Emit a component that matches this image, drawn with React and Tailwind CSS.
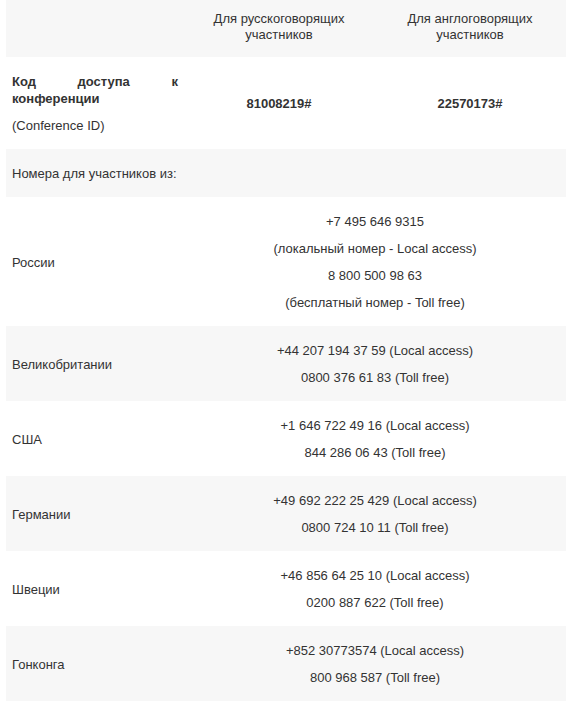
import React from 'react'

const rows = [
	{ country: 'России', lines: ['+7 495 646 9315', '(локальный номер - Local access)', '8 800 500 98 63', '(бесплатный номер - Toll free)'] },
	{ country: 'Великобритании', lines: ['+44 207 194 37 59 (Local access)', '0800 376 61 83 (Toll free)'] },
	{ country: 'США', lines: ['+1 646 722 49 16 (Local access)', '844 286 06 43 (Toll free)'] },
	{ country: 'Германии', lines: ['+49 692 222 25 429 (Local access)', '0800 724 10 11 (Toll free)'] },
	{ country: 'Швеции', lines: ['+46 856 64 25 10 (Local access)', '0200 887 622 (Toll free)'] },
	{ country: 'Гонконга', lines: ['+852 30773574 (Local access)', '800 968 587 (Toll free)'] },
]

export default function App() {
	const cell = 'px-[6px] pt-[16px] pb-[15px] align-middle'
	return (
		<div className="min-h-[710px] bg-white pl-[6px] text-[13px] leading-[17px] text-[#333]" style={{ fontFamily: '"Liberation Sans", Arial, sans-serif' }}>
			<table className="w-[560px] table-fixed border-collapse">
				<colgroup>
					<col className="w-[178px]" />
					<col className="w-[190px]" />
					<col className="w-[192px]" />
				</colgroup>
				<tbody>
					<tr className="bg-[#f7f7f7]">
						<td className="px-[6px] pt-[11px] pb-[14px]"></td>
						<td className="px-[6px] pt-[11px] pb-[14px] text-center leading-[16px]">Для русскоговорящих<br />участников</td>
						<td className="px-[6px] pt-[11px] pb-[14px] text-center leading-[16px]">Для англоговорящих<br />участников</td>
					</tr>
					<tr className="bg-white">
						<td className={cell}>
							<p className="text-justify font-bold">Код доступа к конференции</p>
							<p className="mt-[10px]">(Conference ID)</p>
						</td>
						<td className={cell + ' text-center font-bold'}>81008219#</td>
						<td className={cell + ' text-center font-bold'}>22570173#</td>
					</tr>
					<tr className="bg-[#f7f7f7]">
						<td colSpan={3} className={cell}>Номера для участников из:</td>
					</tr>
					{rows.map((r, i) => (
						<tr key={i} className={i % 2 === 0 ? 'bg-white' : 'bg-[#f7f7f7]'}>
							<td className={cell}>{r.country}</td>
							<td colSpan={2} className={cell + ' text-center'}>
								{r.lines.map((l, j) => (
									<p key={j} className={j > 0 ? 'mt-[10px]' : ''}>{l}</p>
								))}
							</td>
						</tr>
					))}
				</tbody>
			</table>
		</div>
	)
}
